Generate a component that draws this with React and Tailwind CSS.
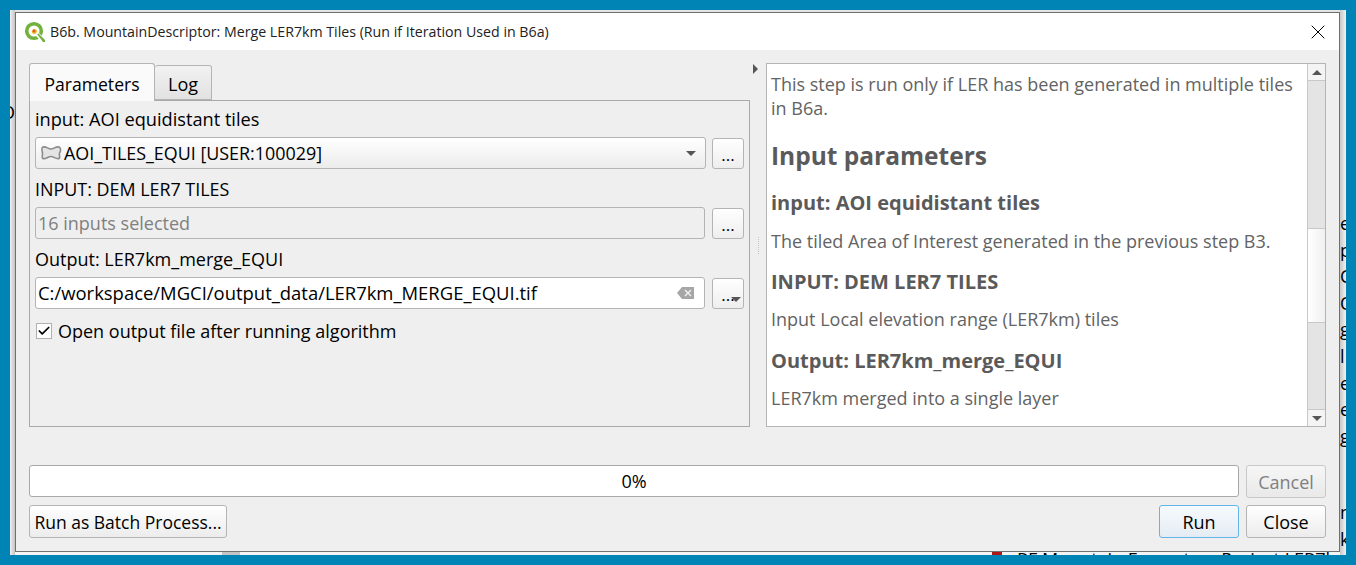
import { Check, X } from 'lucide-react';

const font = { fontFamily: '"Open Sans", sans-serif' };

function QgisLogo() {
  return (
    <svg width="22" height="22" viewBox="0 0 22 22">
      <circle cx="10" cy="10" r="7.3" fill="none" stroke="#72b23c" strokeWidth="3.6" />
      <circle cx="10.5" cy="10.5" r="2.6" fill="#f2c230" />
      <circle cx="10" cy="10" r="1.5" fill="#e4572e" />
      <path d="M12 12l2-1 8 8v3h-3l-8-8z" fill="#ffffff" />
      <path d="M13 13l1.5-.5 6.5 6.5v2h-2z" fill="#72b23c" />
    </svg>
  );
}

function PolygonIcon() {
  return (
    <svg width="22" height="16" viewBox="0 0 22 16">
      <path
        d="M3 2C6 1 8 4 11 4s5-3 8-2c2 1 2 4 .5 6-1 2 1.500 4-.5 5.500C16 14.500 14 11.500 11 11.500S5 15 3 13.500C1 12 3 10 2.500 8 2 6 1 3 3 2z"
        fill="#e4e4e4"
        stroke="#8c8c8c"
        strokeWidth="1.6"
      />
    </svg>
  );
}

function Caret({ className = '' }) {
  return <span className={`block h-0 w-0 border-x-[5px] border-t-[5px] border-x-transparent border-t-[#555] ${className}`} />;
}

function DotsButton({ menu = false }) {
  return (
    <button className="relative flex h-[31px] w-[32px] shrink-0 items-center justify-center rounded-[3px] border border-[#b4b4b4] bg-gradient-to-b from-white to-[#eeeeee] text-[17px] leading-none text-black">
      <span className="mt-[2px]">...</span>
      {menu && <Caret className="absolute right-[2px] bottom-[6px]" />}
    </button>
  );
}

function PushButton({ children, className = '' }) {
  return (
    <button className={`flex h-[33px] items-center justify-center rounded-[3px] border leading-[24px] ${className}`}>
      {children}
    </button>
  );
}

export default function App() {
  return (
    <div className="h-[565px] w-[1356px] overflow-hidden bg-[#0083b5] p-[10px]" style={font}>
      <div className="flex h-[545px] w-[1336px] bg-[#e4e4e4]">
        {/* Window behind the dialog, left edge */}
        <div className="flex w-[5px] shrink-0 flex-col items-end overflow-hidden bg-gradient-to-r from-[#efefef] to-[#c4c4c4] pt-[90px] text-[18px] leading-[24px] text-black">
          <span>O</span>
        </div>

        <div className="flex w-[1325px] shrink-0 flex-col pt-[2px]">
          {/* Dialog window */}
          <div className="flex h-[540px] shrink-0 flex-col border border-[#6f6f6f] bg-[#efefef] text-black">
            <div className="flex h-[37px] shrink-0 items-center bg-white pl-[8px] pr-[9px]">
              <QgisLogo />
              <span className="ml-[4px] text-[14.2px] text-[#222]">B6b. MountainDescriptor: Merge LER7km Tiles (Run if Iteration Used in B6a)</span>
              <X className="ml-auto h-[24px] w-[24px] text-black" strokeWidth={1} />
            </div>

            <div className="flex flex-1 flex-col px-[13px] pt-[13px]">
              <div className="flex h-[364px] shrink-0">
                {/* Parameters panel */}
                <div className="flex w-[721px] shrink-0 flex-col">
                  <div className="flex h-[37px] shrink-0 items-end">
                    <div className="relative z-10 -mb-px flex h-[38px] w-[126px] items-center justify-center rounded-t-[3px] border border-b-0 border-[#b4b4b4] bg-[#fafafa] pt-[3px] text-[17.6px]">Parameters</div>
                    <div className="flex h-[35px] w-[57px] items-center justify-center rounded-t-[3px] border border-l-0 border-[#b4b4b4] bg-gradient-to-b from-[#f2f2f2] to-[#e2e2e2] pt-[4px] text-[18px]">Log</div>
                  </div>
                  <div className="flex-1 border border-[#a9a9a9] px-[5px]">
                    <div className="mt-[6px] h-[24px] text-[18.2px] leading-[24px]">input: AOI equidistant tiles</div>
                    <div className="mt-[6px] flex items-center gap-[6px]">
                      <div className="flex h-[32px] flex-1 items-center rounded-[3px] border border-[#b4b4b4] bg-gradient-to-b from-white to-[#ececec] pl-[4px] pr-[9px] text-[17.9px]">
                        <PolygonIcon />
                        <span className="ml-[2px]">AOI_TILES_EQUI [USER:100029]</span>
                        <Caret className="ml-auto" />
                      </div>
                      <DotsButton />
                    </div>
                    <div className="mt-[8px] h-[24px] text-[17.9px] leading-[24px]">INPUT: DEM LER7 TILES</div>
                    <div className="mt-[6px] flex items-center gap-[7px]">
                      <div className="flex h-[32px] flex-1 items-center rounded-[3px] border border-[#b4b4b4] bg-[#efefef] pl-[2px] text-[18px] text-[#808080]">16 inputs selected</div>
                      <DotsButton />
                    </div>
                    <div className="mt-[8px] h-[24px] text-[18px] leading-[24px]">Output: LER7km_merge_EQUI</div>
                    <div className="mt-[6px] flex items-center gap-[7px]">
                      <div className="flex h-[32px] flex-1 items-center rounded-[3px] border border-[#b4b4b4] bg-white pl-[2px] pr-[10px] text-[18.45px]">
                        C:/workspace/MGCI/output_data/LER7km_MERGE_EQUI.tif
                        <svg className="ml-auto" width="17" height="12" viewBox="0 0 17 12">
                          <path d="M5 0h12v12H5L0 6z" fill="#a6a6a6" />
                          <path d="M8 3l6 6M14 3l-6 6" stroke="#f2f2f2" strokeWidth="1.4" />
                        </svg>
                      </div>
                      <DotsButton menu />
                    </div>
                    <div className="mt-[10px] flex items-center gap-[6px] pl-[1px] text-[18px] leading-[24px]">
                      <span className="flex h-[16px] w-[16px] items-center justify-center border border-[#b0b0b0] bg-white">
                        <Check className="h-[14px] w-[14px]" strokeWidth={3} />
                      </span>
                      Open output file after running algorithm
                    </div>
                  </div>
                </div>

                {/* Splitter */}
                <div className="flex w-[16px] shrink-0 flex-col items-center">
                  <span className="ml-[3px] mt-[1px] block h-0 w-0 self-start border-y-[5px] border-l-[5px] border-y-transparent border-l-[#555]" />
                  <span className="mt-[163px] h-[17px] border-l border-dotted border-[#c4c4c4]" />
                </div>

                {/* Help panel */}
                <div className="flex w-[560px] shrink-0 border border-[#b4b4b4] bg-white">
                  <div className="flex-1 overflow-hidden pl-[4px] pr-[8px] pt-[8px] text-[#5a5a5a]">
                    <p className="text-[18px] leading-[24px] text-[#636363]">This step is run only if LER has been generated in multiple tiles in B6a.</p>
                    <h1 className="mt-[20px] text-[24.5px] font-bold leading-[32px]">Input parameters</h1>
                    <h2 className="mt-[17px] text-[20px] font-bold leading-[28px]">input: AOI equidistant tiles</h2>
                    <p className="mt-[12px] text-[18px] leading-[24px] text-[#636363]">The tiled Area of Interest generated in the previous step B3.</p>
                    <h2 className="mt-[15px] text-[20px] font-bold leading-[28px]">INPUT: DEM LER7 TILES</h2>
                    <p className="mt-[11px] text-[18px] leading-[24px] text-[#636363]">Input Local elevation range (LER7km) tiles</p>
                    <h2 className="mt-[16px] text-[20px] font-bold leading-[28px]">Output: LER7km_merge_EQUI</h2>
                    <p className="mt-[11px] text-[18px] leading-[24px] text-[#636363]">LER7km merged into a single layer</p>
                  </div>
                  <div className="flex w-[18px] shrink-0 flex-col border-l border-[#c8c8c8] bg-[#e4e4e4]">
                    <div className="flex h-[17px] items-center justify-center border-b border-[#c8c8c8] bg-[#f4f4f4]">
                      <span className="block h-0 w-0 border-x-[5px] border-b-[5px] border-x-transparent border-b-[#555]" />
                    </div>
                    <div className="h-[147px]" />
                    <div className="h-[95px] border-y border-[#c8c8c8] bg-gradient-to-r from-white to-[#f0f0f0]" />
                    <div className="flex-1" />
                    <div className="flex h-[17px] items-center justify-center border-t border-[#c8c8c8] bg-[#f4f4f4]">
                      <Caret />
                    </div>
                  </div>
                </div>
              </div>

              {/* Progress row */}
              <div className="mt-[38px] flex gap-[7px]">
                <div className="flex h-[32px] w-[1210px] items-center justify-center rounded-[3px] border border-[#a9a9a9] bg-white text-[18px]">0%</div>
                <PushButton className="w-[80px] border-[#c8c8c8] bg-gradient-to-b from-[#f6f6f6] to-[#e9e9e9] text-[18px] text-[#808080]">Cancel</PushButton>
              </div>

              {/* Bottom buttons */}
              <div className="mt-[7px] flex gap-[7px]">
                <PushButton className="mr-auto w-[198px] border-[#b4b4b4] bg-gradient-to-b from-white to-[#ececec] text-[17.5px]">Run as Batch Process...</PushButton>
                <PushButton className="w-[80px] border-[#63b4e8] bg-gradient-to-b from-[#f6fafd] to-[#e4ecf3] text-[18px]">Run</PushButton>
                <PushButton className="w-[80px] border-[#b4b4b4] bg-gradient-to-b from-white to-[#ececec] text-[18px]">Close</PushButton>
              </div>
            </div>
          </div>

          {/* Window behind the dialog, bottom edge */}
          <div className="flex h-[3px] shrink-0 overflow-hidden bg-[#f4f4f4] text-[18px] leading-none text-black">
            <div className="ml-[207px] w-[18px] shrink-0 bg-[#c4c4c4]" />
            <div className="ml-[752px] h-[3px] w-[10px] shrink-0 bg-[#b01818]" />
            <div className="-mt-[2px] ml-[15px] whitespace-nowrap">RF Mountain Ecosystem Project LER7km</div>
          </div>
        </div>

        {/* Window behind the dialog, right edge */}
        <div className="w-[6px] shrink-0 overflow-hidden bg-gradient-to-r from-[#c8c8c8] to-[#f2f2f2] pt-[200px] text-[18px] leading-[26.6px] text-black">
          {['e', 'p', 'C', 'O', 'g', 'l', 'e', 'e', 'g', ' ', ' ', 'm', 'kr'].map((c, i) => (
            <div key={i} className={c === ' ' ? 'h-[25px]' : 'h-[26.6px]'}>{c}</div>
          ))}
        </div>
      </div>
    </div>
  );
}
